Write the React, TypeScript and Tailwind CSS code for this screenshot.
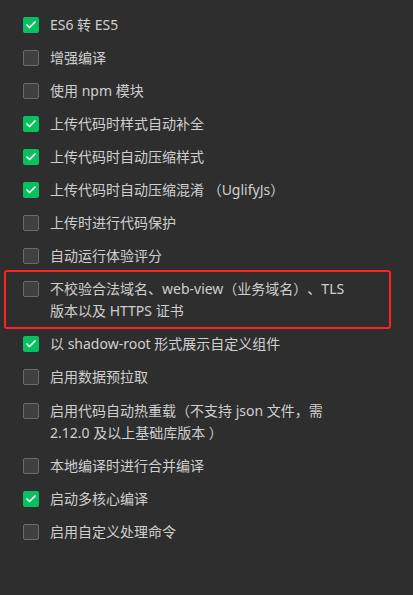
import { Check } from 'lucide-react';

type Option = { label: string; checked: boolean; marked?: boolean };

const options: Option[] = [
  { label: 'ES6 转 ES5', checked: true },
  { label: '增强编译', checked: false },
  { label: '使用 npm 模块', checked: false },
  { label: '上传代码时样式自动补全', checked: true },
  { label: '上传代码时自动压缩样式', checked: true },
  { label: '上传代码时自动压缩混淆 （UglifyJs）', checked: true },
  { label: '上传时进行代码保护', checked: false },
  { label: '自动运行体验评分', checked: false },
  { label: '不校验合法域名、web-view（业务域名）、TLS 版本以及 HTTPS 证书', checked: false, marked: true },
  { label: '以 shadow-root 形式展示自定义组件', checked: true },
  { label: '启用数据预拉取', checked: false },
  { label: '启用代码自动热重载（不支持 json 文件，需 2.12.0 及以上基础库版本 ）', checked: false },
  { label: '本地编译时进行合并编译', checked: false },
  { label: '启动多核心编译', checked: true },
  { label: '启用自定义处理命令', checked: false },
];

function Box({ checked }: { checked: boolean }) {
  if (checked) {
    return (
      <span className="flex h-4 w-4 shrink-0 items-center justify-center rounded-[2px] bg-[#07c160]">
        <Check className="h-3 w-3 text-white" strokeWidth={3.4} />
      </span>
    );
  }
  return <span className="h-4 w-4 shrink-0 rounded-[2px] border border-[#6a6a6a] bg-[#404040]" />;
}

export default function App() {
  return (
    <div
      className="min-h-[595px] w-[413px] bg-[#2e2e2e] pt-[13.5px] text-[14px] leading-[22px] text-[#cfcfcf] [text-spacing-trim:space-all]"
      style={{ fontFamily: '"Noto Sans", "Noto Sans CJK SC", sans-serif' }}
    >
      {options.map((o, i) => (
        <div key={i} className="relative flex items-start gap-[11px] pb-[11.1px] pl-[23px]">
          {o.marked && (
            <div className="pointer-events-none absolute left-[4px] top-[-8px] h-[59px] w-[387px] rounded-[3px] border-2 border-[#ff2222]" />
          )}
          <span className="flex h-[22px] items-center">
            <Box checked={o.checked} />
          </span>
          <span className="w-[298px]">{o.label}</span>
        </div>
      ))}
    </div>
  );
}
